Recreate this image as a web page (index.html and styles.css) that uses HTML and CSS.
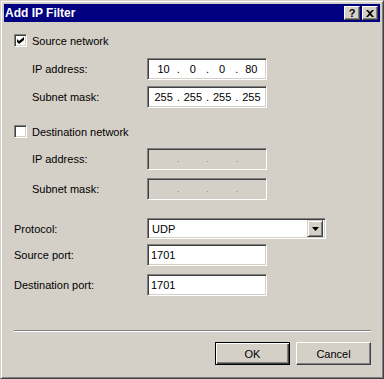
FILE: index.html
```html
<!DOCTYPE html>
<html lang="en">
<head>
  <meta charset="UTF-8">
  <title>Add IP Filter</title>
  <link rel="stylesheet" href="styles.css">
</head>
<body>
  <div class="window">
    <div class="titlebar">
      <span class="title">Add IP Filter</span>
      <div class="caption-buttons">
        <span class="cap-btn help">?</span>
        <span class="cap-btn close">
          <svg width="8" height="7" viewBox="0 0 8 7"><path d="M0 0h2l2 2 2-2h2L5 3.5 8 7H6L4 5 2 7H0l3-3.5z" fill="#000"/></svg>
        </span>
      </div>
    </div>

    <div class="content">
      <div class="check-row r1">
        <span class="checkbox"><svg width="7" height="7" viewBox="0 0 7 7"><path d="M0 2l2 2 5-4v3l-5 4-2-2z" fill="#000"/></svg></span>
        <span class="check-label">Source network</span>
      </div>
      <div class="field-row indent r2">
        <span class="label">IP address:</span>
        <div class="ipbox">
          <span class="oct">10</span><span class="dot">.</span><span class="oct">0</span><span class="dot">.</span><span class="oct">0</span><span class="dot">.</span><span class="oct">80</span>
        </div>
      </div>
      <div class="field-row indent r3">
        <span class="label">Subnet mask:</span>
        <div class="ipbox">
          <span class="oct">255</span><span class="dot">.</span><span class="oct">255</span><span class="dot">.</span><span class="oct">255</span><span class="dot">.</span><span class="oct">255</span>
        </div>
      </div>

      <div class="check-row r4">
        <span class="checkbox"></span>
        <span class="check-label">Destination network</span>
      </div>
      <div class="field-row indent r5">
        <span class="label">IP address:</span>
        <div class="ipbox disabled">
          <span class="oct"></span><span class="dot">.</span><span class="oct"></span><span class="dot">.</span><span class="oct"></span><span class="dot">.</span><span class="oct"></span>
        </div>
      </div>
      <div class="field-row indent r6">
        <span class="label">Subnet mask:</span>
        <div class="ipbox disabled">
          <span class="oct"></span><span class="dot">.</span><span class="oct"></span><span class="dot">.</span><span class="oct"></span><span class="dot">.</span><span class="oct"></span>
        </div>
      </div>

      <div class="field-row r7">
        <span class="label wide">Protocol:</span>
        <div class="select">
          <span class="select-text">UDP</span>
          <span class="drop-btn"><svg width="7" height="4" viewBox="0 0 7 4"><path d="M0 0h7L3.5 4z" fill="#000"/></svg></span>
        </div>
      </div>
      <div class="field-row r8">
        <span class="label wide">Source port:</span>
        <div class="textbox">1701</div>
      </div>
      <div class="field-row r9">
        <span class="label wide">Destination port:</span>
        <div class="textbox">1701</div>
      </div>

      <div class="separator"></div>

      <div class="buttons">
        <span class="btn default">OK</span>
        <span class="btn">Cancel</span>
      </div>
    </div>
  </div>
</body>
</html>
```

FILE: styles.css
```css
body {
  margin: 0;
  background: #d4d0c8;
  font-family: "Liberation Sans", Arial, sans-serif;
  font-size: 11px;
  color: #000;
}
.window {
  width: 384px;
  height: 379px;
  box-sizing: border-box;
  background: #d4d0c8;
  border: 1px solid;
  border-color: #d4d0c8 #404040 #404040 #d4d0c8;
  box-shadow: inset 1px 1px 0 #fff, inset -1px -1px 0 #808080;
}
.titlebar {
  margin: 3px 3px 0 3px;
  height: 18px;
  box-sizing: border-box;
  background: #000080;
  display: flex;
  align-items: center;
  justify-content: space-between;
  padding: 0 2px 0 1px;
}
.title {
  color: #fff;
  font-weight: bold;
  font-size: 12px;
}
.caption-buttons {
  display: flex;
  gap: 2px;
}
.cap-btn {
  width: 16px;
  height: 14px;
  box-sizing: border-box;
  background: #d4d0c8;
  display: flex;
  align-items: center;
  justify-content: center;
  border: 1px solid;
  border-color: #fff #404040 #404040 #fff;
  box-shadow: inset -1px -1px 0 #808080;
  font-weight: bold;
  font-size: 11px;
  line-height: 1;
}
.content {
  padding: 0 12px 0 13px;
  display: flex;
  flex-direction: column;
}
.check-row {
  display: flex;
  align-items: center;
  height: 13px;
}
.checkbox {
  width: 13px;
  height: 13px;
  box-sizing: border-box;
  background: #fff;
  border: 1px solid;
  border-color: #808080 #fff #fff #808080;
  box-shadow: inset 1px 1px 0 #404040, inset -1px -1px 0 #d4d0c8;
  display: flex;
  align-items: center;
  justify-content: center;
}
.check-label {
  margin-left: 5px;
}
.field-row {
  display: flex;
  align-items: center;
  height: 22px;
}
.field-row.indent {
  padding-left: 18px;
}
.label {
  width: 115px;
  flex: none;
}
.label.wide {
  width: 133px;
}
.ipbox, .textbox, .select {
  height: 22px;
  box-sizing: border-box;
  background: #fff;
  border: 1px solid;
  border-color: #808080 #fff #fff #808080;
  box-shadow: inset 1px 1px 0 #404040, inset -1px -1px 0 #d4d0c8;
}
.ipbox {
  width: 120px;
  display: flex;
  align-items: center;
  padding: 0 3px 0 4px;
  font-size: 11px;
}
.ipbox.disabled {
  background: #d4d0c8;
  color: #808080;
  font-size: 9px;
}
.oct {
  flex: 1;
  text-align: center;
}
.dot {
  width: 6px;
  text-align: center;
}
.textbox {
  width: 120px;
  padding: 0 3px;
  display: flex;
  align-items: center;
  font-size: 11px;
}
.select {
  width: 179px;
  height: 21px;
  display: flex;
  align-items: center;
  justify-content: space-between;
  padding: 2px;
  font-size: 11px;
}
.select-text {
  padding-left: 2px;
}
.drop-btn {
  width: 16px;
  height: 17px;
  box-sizing: border-box;
  background: #d4d0c8;
  border: 1px solid;
  border-color: #d4d0c8 #404040 #404040 #d4d0c8;
  box-shadow: inset 1px 1px 0 #fff, inset -1px -1px 0 #808080;
  display: flex;
  align-items: center;
  justify-content: center;
}
.r1 { margin-top: 12px; }
.r2 { margin-top: 11px; }
.r3 { margin-top: 6px; }
.r4 { margin-top: 17px; }
.r5 { margin-top: 10px; }
.r6 { margin-top: 8px; }
.r7 { margin-top: 18px; height: 21px; }
.r8 { margin-top: 5px; }
.r9 { margin-top: 8px; }
.separator {
  margin-top: 34px;
  height: 1px;
  background: #808080;
  border-bottom: 1px solid #fff;
}
.buttons {
  margin-top: 10px;
  display: flex;
  justify-content: flex-end;
  gap: 6px;
}
.btn {
  width: 75px;
  height: 23px;
  box-sizing: border-box;
  display: flex;
  align-items: center;
  justify-content: center;
  background: #d4d0c8;
  border: 1px solid;
  border-color: #fff #404040 #404040 #fff;
  box-shadow: inset -1px -1px 0 #808080;
  font-size: 11px;
}
.btn.default {
  border-color: #000;
  box-shadow: inset 1px 1px 0 #fff, inset -1px -1px 0 #404040, inset -2px -2px 0 #808080;
}
```
